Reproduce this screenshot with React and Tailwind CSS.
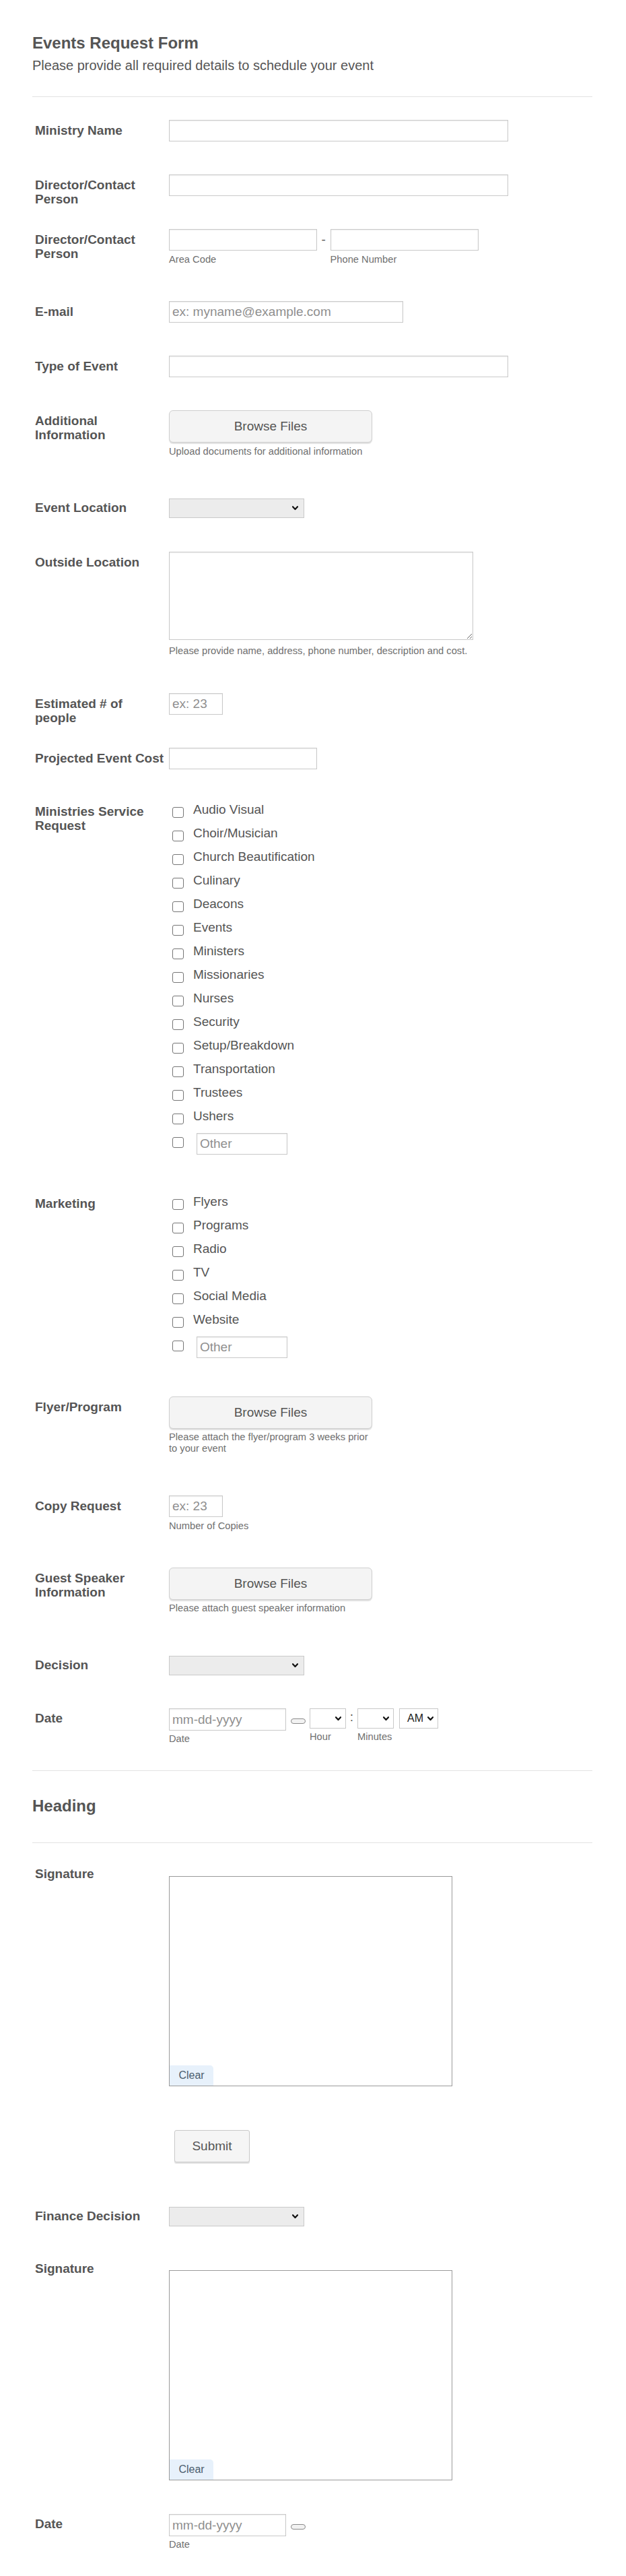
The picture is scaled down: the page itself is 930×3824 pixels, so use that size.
import React from "react";

const FONT = "font-['Liberation_Sans',Arial,Helvetica,sans-serif]";

function Chevron() {
  return (
    <svg width="9" height="7" viewBox="0 0 9 7" className="shrink-0">
      <path d="M1 1.2 L4.5 5 L8 1.2" fill="none" stroke="#111" strokeWidth="2.2" strokeLinecap="round" strokeLinejoin="round" />
    </svg>
  );
}

function Label({ children, pt }) {
  return (
    <div className={`w-[203px] shrink-0 pl-[4px] pr-[5px] text-[19px] leading-[21px] font-bold text-[#555555] ${pt}`}>
      {children}
    </div>
  );
}

function Row({ h, label, pt = "pt-[5px]", children }) {
  return (
    <div className={`flex ${h}`}>
      <Label pt={pt}>{label}</Label>
      <div className="min-w-0 flex-1">{children}</div>
    </div>
  );
}

function TextInput({ w, h = "h-[32px]", placeholder }) {
  return (
    <input
      readOnly
      placeholder={placeholder}
      className={`block ${w} ${h} border border-[#c9c9c9] bg-white px-[4px] text-[19px] text-[#555] shadow-[inset_0_1px_2px_rgba(0,0,0,0.07)] outline-none placeholder:text-[#8f8f8f]`}
    />
  );
}

function Sub({ children, mt = "mt-[5px]", w = "" }) {
  return <div className={`${mt} ${w} text-[14.7px] leading-[17px] text-[#6f6f6f]`}>{children}</div>;
}

function Select() {
  return (
    <div className="flex h-[29px] w-[201px] items-center justify-end border border-[#c9c9c9] bg-[#ececec] pr-[8px]">
      <Chevron />
    </div>
  );
}

function BrowseButton() {
  return (
    <div className="flex h-[48px] w-[302px] items-center justify-center rounded-[6px] border border-[#cfcfcf] bg-[#f4f4f4] text-[19px] text-[#555555] shadow-[0_2px_1px_rgba(0,0,0,0.12)]">
      Browse Files
    </div>
  );
}

function Box() {
  return <span className="mt-[14px] ml-[5px] block h-[16px] w-[17px] shrink-0 rounded-[3px] border border-[#767676] bg-white" />;
}

function CheckList({ items }) {
  return (
    <div>
      {items.map((t) => (
        <div key={t} className="flex h-[35px]">
          <Box />
          <span className="ml-[14px] text-[19px] leading-[35px] text-[#555555]">{t}</span>
        </div>
      ))}
      <div className="flex h-[44px]">
        <Box />
        <input
          readOnly
          placeholder="Other"
          className="mt-[8px] ml-[19px] block h-[32px] w-[135px] border border-[#c9c9c9] bg-white px-[4px] text-[19px] shadow-[inset_0_1px_2px_rgba(0,0,0,0.07)] outline-none placeholder:text-[#8f8f8f]"
        />
      </div>
    </div>
  );
}

function Pill() {
  return <span className="mt-[15px] ml-[7px] block h-[8px] w-[22px] shrink-0 rounded-full border border-[#8a8a8a] bg-[#f2f2f2]" />;
}

function SmallSelect({ w, text }) {
  return (
    <div className={`flex h-[30px] ${w} items-center justify-end border border-[#c9c9c9] bg-white pr-[6px]`}>
      {text ? <span className="mr-[6px] text-[16px] text-[#222]">{text}</span> : null}
      <Chevron />
    </div>
  );
}

function Signature() {
  return (
    <div className="flex h-[312px] w-[421px] flex-col justify-end border border-[#9a9a9a] bg-white">
      <div className="h-[30px] w-[65px] rounded-tr-[5px] bg-[#e7f1fb] text-center text-[16px] leading-[30px] text-[#4b5d6e]">
        Clear
      </div>
    </div>
  );
}

const ministries = [
  "Audio Visual",
  "Choir/Musician",
  "Church Beautification",
  "Culinary",
  "Deacons",
  "Events",
  "Ministers",
  "Missionaries",
  "Nurses",
  "Security",
  "Setup/Breakdown",
  "Transportation",
  "Trustees",
  "Ushers",
];

const marketing = ["Flyers", "Programs", "Radio", "TV", "Social Media", "Website"];

export default function App() {
  return (
    <div className={`${FONT} min-h-[3824px] w-full bg-white`}>
      <div className="pl-[48px] pr-[50px]">
        <div className="border-b border-[#e3e3e3] pt-[50px] pb-[34px]">
          <div className="text-[24px] leading-[28px] font-bold text-[#555555]">Events Request Form</div>
          <div className="mt-[7px] text-[20px] leading-[24px] text-[#555555]">
            Please provide all required details to schedule your event
          </div>
        </div>

        <div className="mt-[34px]">
          <Row h="h-[81px]" label="Ministry Name">
            <TextInput w="w-[504px]" />
          </Row>
          <Row h="h-[81px]" label="Director/Contact Person">
            <TextInput w="w-[504px]" />
          </Row>
          <Row h="h-[107px]" label="Director/Contact Person">
            <div className="flex items-start">
              <div>
                <TextInput w="w-[220px]" />
                <Sub>Area Code</Sub>
              </div>
              <div className="h-[32px] w-[19.5px] text-center text-[19px] leading-[32px] text-[#555]">-</div>
              <div>
                <TextInput w="w-[220px]" />
                <Sub>Phone Number</Sub>
              </div>
            </div>
          </Row>
          <Row h="h-[81px]" label="E-mail">
            <TextInput w="w-[348px]" placeholder="ex: myname@example.com" />
          </Row>
          <Row h="h-[81px]" label="Type of Event">
            <TextInput w="w-[504px]" />
          </Row>
          <Row h="h-[131px]" label="Additional Information">
            <BrowseButton />
            <Sub mt="mt-[5px]">Upload documents for additional information</Sub>
          </Row>
          <Row h="h-[79px]" label="Event Location" pt="pt-[3px]">
            <Select />
          </Row>
          <Row h="h-[210px]" label="Outside Location">
            <textarea
              readOnly
              className="block h-[131px] w-[452px] resize border border-[#c9c9c9] bg-white shadow-[inset_0_1px_2px_rgba(0,0,0,0.07)] outline-none"
            />
            <Sub mt="mt-[8px]">Please provide name, address, phone number, description and cost.</Sub>
          </Row>
          <Row h="h-[81px]" label="Estimated # of people">
            <TextInput w="w-[80px]" placeholder="ex: 23" />
          </Row>
          <Row h="h-[74px]" label="Projected Event Cost">
            <TextInput w="w-[220px]" />
          </Row>
          <Row h="h-[582px]" label="Ministries Service Request" pt="pt-[10px]">
            <CheckList items={ministries} />
          </Row>
          <Row h="h-[307px]" label="Marketing" pt="pt-[10px]">
            <CheckList items={marketing} />
          </Row>
          <Row h="h-[147px]" label="Flyer/Program">
            <BrowseButton />
            <Sub mt="mt-[4px]" w="w-[302px]">
              Please attach the flyer/program 3 weeks prior to your event
            </Sub>
          </Row>
          <Row h="h-[107px]" label="Copy Request">
            <TextInput w="w-[80px]" placeholder="ex: 23" />
            <Sub>Number of Copies</Sub>
          </Row>
          <Row h="h-[131px]" label="Guest Speaker Information">
            <BrowseButton />
            <Sub mt="mt-[4px]">Please attach guest speaker information</Sub>
          </Row>
          <Row h="h-[78px]" label="Decision" pt="pt-[3px]">
            <Select />
          </Row>
          <Row h="h-[92px]" label="Date" pt="pt-[4px]">
            <div className="flex items-start">
              <div>
                <TextInput w="w-[174px]" h="h-[33px]" placeholder="mm-dd-yyyy" />
                <Sub mt="mt-[4px]">Date</Sub>
              </div>
              <Pill />
              <div className="ml-[6px]">
                <SmallSelect w="w-[54px]" />
                <Sub mt="mt-[4px]">Hour</Sub>
              </div>
              <div className="h-[30px] w-[17px] text-center text-[19px] leading-[26px] text-[#555]">:</div>
              <div>
                <SmallSelect w="w-[54px]" />
                <Sub mt="mt-[4px]">Minutes</Sub>
              </div>
              <div className="ml-[8px]">
                <SmallSelect w="w-[58px]" text="AM" />
              </div>
            </div>
          </Row>
        </div>

        <div className="h-[108px] border-y border-[#e3e3e3] pt-[38px]">
          <div className="text-[24px] leading-[28px] font-bold text-[#555555]">Heading</div>
        </div>

        <div className="mt-[30px]">
          <Row h="h-[396px]" label="Signature" pt="pt-[5px]">
            <div className="pt-[19px]">
              <Signature />
            </div>
          </Row>
          <div className="flex h-[114px]">
            <div className="w-[203px] shrink-0" />
            <div className="ml-[8px] flex h-[48px] w-[112px] items-center justify-center rounded-[3px] border border-[#c9c9c9] bg-[#f5f5f5] text-[19px] text-[#555555] shadow-[0_2px_1px_rgba(0,0,0,0.12)]">
              Submit
            </div>
          </div>
          <Row h="h-[76px]" label="Finance Decision" pt="pt-[3px]">
            <Select />
          </Row>
          <Row h="h-[380px]" label="Signature" pt="pt-[5px]">
            <div className="pt-[18px]">
              <Signature />
            </div>
          </Row>
          <Row h="h-[92px]" label="Date" pt="pt-[4px]">
            <div className="flex items-start">
              <div>
                <TextInput w="w-[174px]" h="h-[33px]" placeholder="mm-dd-yyyy" />
                <Sub mt="mt-[4px]">Date</Sub>
              </div>
              <Pill />
            </div>
          </Row>
        </div>
      </div>
    </div>
  );
}
